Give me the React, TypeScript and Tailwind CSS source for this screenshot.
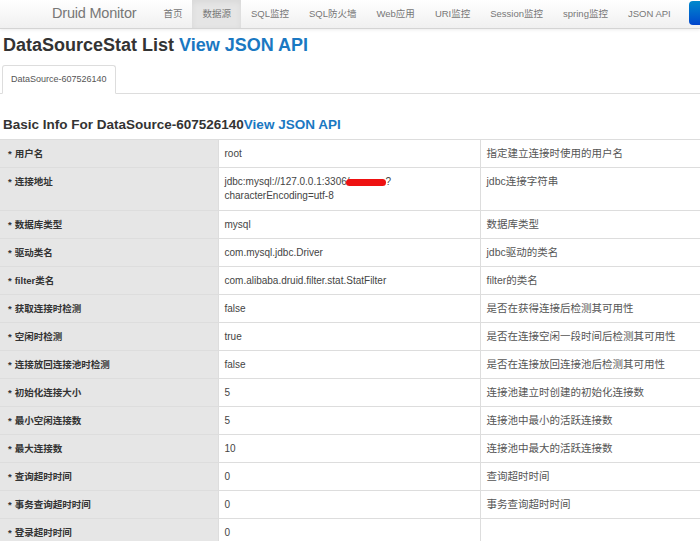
import React from "react";

const font = { fontFamily: '"Liberation Sans", "Noto Sans CJK SC", sans-serif' };

const rows: [string, React.ReactNode, string][] = [
  ["用户名", "root", "指定建立连接时使用的用户名"],
  [
    "连接地址",
    <div className="leading-[14px]">
      jdbc:mysql://127.0.0.1:3306/
      <span className="inline-block w-[40px] h-[7px] bg-[#ee1111] rounded-full align-middle -ml-[4px]" />
      ?
      <br />
      characterEncoding=utf-8
    </div>,
    "jdbc连接字符串",
  ],
  ["数据库类型", "mysql", "数据库类型"],
  ["驱动类名", "com.mysql.jdbc.Driver", "jdbc驱动的类名"],
  ["filter类名", "com.alibaba.druid.filter.stat.StatFilter", "filter的类名"],
  ["获取连接时检测", "false", "是否在获得连接后检测其可用性"],
  ["空闲时检测", "true", "是否在连接空闲一段时间后检测其可用性"],
  ["连接放回连接池时检测", "false", "是否在连接放回连接池后检测其可用性"],
  ["初始化连接大小", "5", "连接池建立时创建的初始化连接数"],
  ["最小空闲连接数", "5", "连接池中最小的活跃连接数"],
  ["最大连接数", "10", "连接池中最大的活跃连接数"],
  ["查询超时时间", "0", "查询超时时间"],
  ["事务查询超时时间", "0", "事务查询超时时间"],
  ["登录超时时间", "0", ""],
];

const navItems = ["首页", "数据源", "SQL监控", "SQL防火墙", "Web应用", "URI监控", "Session监控", "spring监控", "JSON API"];

export default function App() {
  return (
    <div className="w-[700px] h-[541px] overflow-hidden bg-white text-[#333]" style={font}>
      <div className="h-[29px] flex items-stretch bg-gradient-to-b from-white to-[#f0f0f0] border-b border-[#d4d4d4] shadow-[0_1px_3px_rgba(0,0,0,0.08)] whitespace-nowrap">
        <div className="shrink-0 pl-[52px] pr-[17px] flex items-center text-[14.5px] text-[#777] font-light tracking-[-0.2px]">Druid Monitor</div>
        {navItems.map((n, i) => (
          <div
            key={n}
            className={
              "shrink-0 flex items-center px-[10px] text-[9.5px] text-[#777] " +
              (i === 1 ? "bg-[#e5e5e5] shadow-[inset_0_2px_6px_rgba(0,0,0,0.06)]" : "")
            }
          >
            {n}
          </div>
        ))}
        <div className="flex-1" />
        <div className="shrink-0 mt-[1px] mb-[3px] w-[11px] rounded-l-[4px] bg-gradient-to-b from-[#0088cc] to-[#0044cc]" />
      </div>

      <h1 className="mt-[4px] ml-[3px] text-[18px] font-bold leading-[24px] text-[#333]">
        DataSourceStat List <span className="text-[#1a78c2]">View JSON API</span>
      </h1>

      <div className="mt-[8px] flex border-b border-[#ddd] pl-[2px]">
        <div className="-mb-px h-[29px] px-[8px] flex items-center text-[9px] text-[#555] bg-white border border-[#ddd] border-b-white rounded-t-[3px]">
          DataSource-607526140
        </div>
      </div>

      <h2 className="mt-[22px] ml-[3px] text-[13.5px] font-bold leading-[18px] text-[#333]">
        Basic Info For DataSource-607526140<span className="text-[#1a78c2]">View JSON API</span>
      </h2>

      <table className="mt-[5px] w-[700px] border-collapse leading-[13px] table-fixed">
        <colgroup>
          <col className="w-[218px]" />
          <col className="w-[262px]" />
          <col className="w-[220px]" />
        </colgroup>
        <tbody>
          {rows.map(([k, v, d], i) => (
            <tr key={i} className="border-t border-[#ddd]">
              <td className="align-top py-[7px] pl-[8px] bg-[#e6e6e6] font-bold text-[9.5px] text-[#333] border-r border-[#ddd] whitespace-nowrap">
                <span className="mr-[3px]">*</span>{k}
              </td>
              <td className="align-top py-[7px] pl-[6px] text-[10px] text-[#444] border-r border-[#ddd]">{v}</td>
              <td className="align-top py-[7px] pl-[6px] text-[10.5px] text-[#555] whitespace-nowrap">{d}</td>
            </tr>
          ))}
        </tbody>
      </table>
    </div>
  );
}
